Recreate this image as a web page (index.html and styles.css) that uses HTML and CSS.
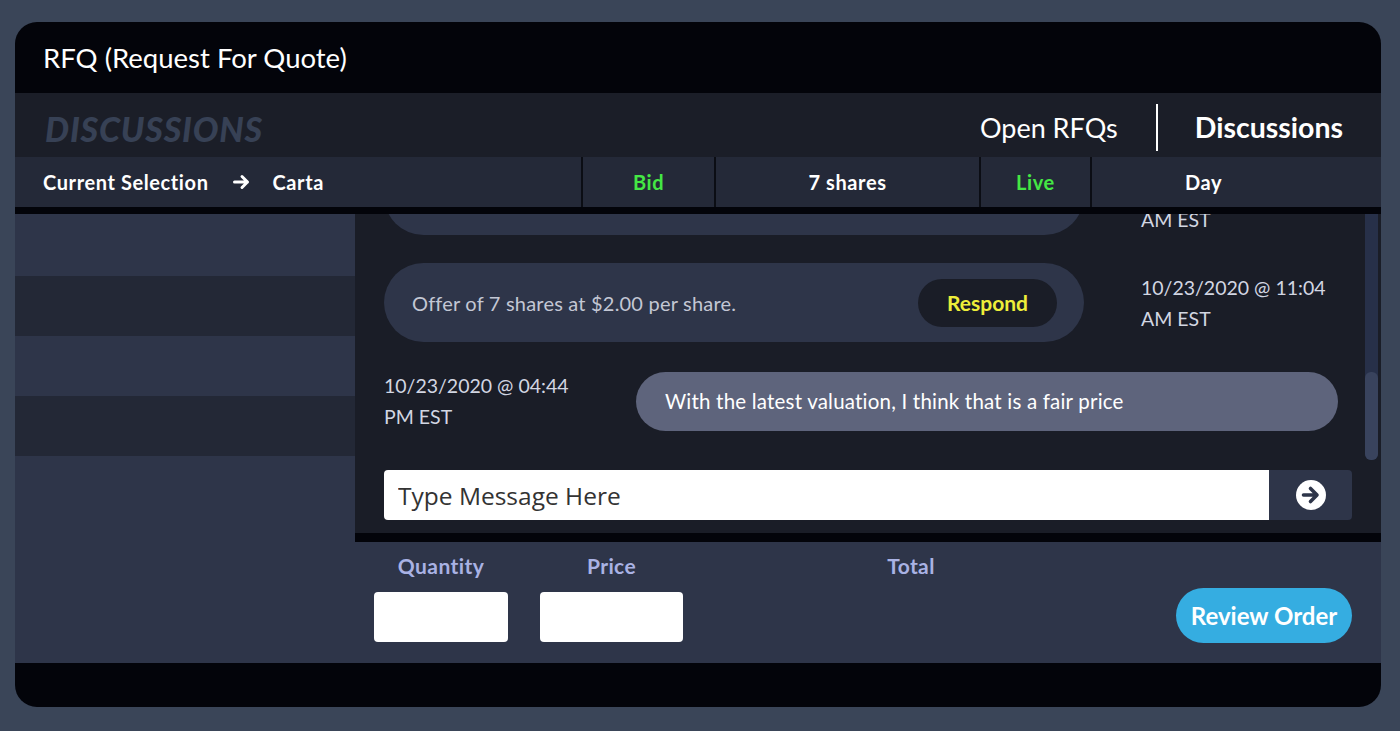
FILE: index.html
```html
<!DOCTYPE html>
<html lang="en">
<head>
  <meta charset="UTF-8" />
  <meta name="viewport" content="width=device-width, initial-scale=1.0"/>
  <title>RFQ Discussions</title>
  <link rel="stylesheet" href="styles.css">
</head>
<body>

  <div class="panel">

    <!-- Title -->
    <div class="title-bar">RFQ (Request For Quote)</div>

    <!-- Tabs -->
    <div class="sub-nav">
      <span class="section-name">DISCUSSIONS</span>
      <div class="tabs">
        <span class="tab">Open RFQs</span>
        <span class="tab-divider"></span>
        <span class="tab tab-active">Discussions</span>
      </div>
    </div>

    <!-- Current selection -->
    <div class="selection-bar">
      <div class="cell cell-left">
        <span>Current Selection</span>
        <svg class="arrow" width="18" height="16" viewBox="0 0 18 16">
          <path d="M1.5 8h13M9 2.5l5.5 5.5-5.5 5.5" fill="none" stroke="#fff" stroke-width="3" stroke-linecap="round" stroke-linejoin="round"/>
        </svg>
        <span>Carta</span>
      </div>
      <div class="cell green">Bid</div>
      <div class="cell">7 shares</div>
      <div class="cell green">Live</div>
      <div class="cell cell-last">Day</div>
    </div>

    <div class="main">
      <!-- Left list -->
      <div class="rfq-list">
        <div class="rfq-row row-first"></div>
        <div class="rfq-row row-dark"></div>
        <div class="rfq-row"></div>
        <div class="rfq-row row-dark"></div>
        <div class="rfq-row row-fill"></div>
      </div>

      <!-- Chat -->
      <div class="chat">
        <div class="messages-wrap">
          <div class="messages">
            <div class="msg msg-in">
              <div class="bubble bubble-offer"></div>
              <div class="stamp stamp-first">10/23/2020 @ 10:58 AM EST</div>
            </div>

            <div class="msg msg-in">
              <div class="bubble bubble-offer">
                <span>Offer of 7 shares at $2.00 per share.</span>
                <button class="respond">Respond</button>
              </div>
              <div class="stamp">10/23/2020 @ 11:04 AM EST</div>
            </div>

            <div class="msg msg-out">
              <div class="stamp stamp-left">10/23/2020 @ 04:44 PM EST</div>
              <div class="bubble bubble-mine">With the latest valuation, I think that is a fair price</div>
            </div>
          </div>
          <div class="scrollbar"><div class="thumb"></div></div>
        </div>

        <div class="composer">
          <input type="text" class="msg-input" placeholder="Type Message Here">
          <button class="send">
            <svg width="32" height="32" viewBox="0 0 32 32">
              <circle cx="16" cy="16" r="15" fill="#fff"/>
              <path d="M8.5 16h13M15.5 9.5l6.5 6.5-6.5 6.5" fill="none" stroke="#2e3549" stroke-width="3.6" stroke-linecap="round" stroke-linejoin="round"/>
            </svg>
          </button>
        </div>
      </div>
    </div>

    <!-- Order form -->
    <div class="order-form">
      <div class="field field-qty">
        <label>Quantity</label>
        <input type="text" class="box">
      </div>
      <div class="field field-price">
        <label>Price</label>
        <input type="text" class="box">
      </div>
      <div class="field field-total">
        <label>Total</label>
      </div>
      <button class="review">Review Order</button>
    </div>

    <div class="panel-footer"></div>
  </div>

</body>
</html>
```

FILE: styles.css
```css
body, html {
  margin: 0;
  padding: 0;
  height: 100%;
  overflow: hidden;
}

body {
  background-color: #3a4558;
  font-family: "Lato", "Liberation Sans", sans-serif;
  color: #fff;
  padding: 22px 19px 0 15px;
  box-sizing: border-box;
}

.panel {
  height: 685px;
  background-color: #03040a;
  border-radius: 22px;
  overflow: hidden;
  display: flex;
  flex-direction: column;
}

.title-bar {
  height: 71px;
  flex-shrink: 0;
  display: flex;
  align-items: center;
  padding-left: 28px;
  font-size: 27.5px;
}

.sub-nav {
  height: 64px;
  flex-shrink: 0;
  background-color: #1b1e28;
  display: flex;
  justify-content: space-between;
  align-items: center;
  padding: 0 38px 0 30px;
}

.section-name {
  font-size: 34px;
  font-weight: 900;
  font-style: italic;
  letter-spacing: 0.8px;
  color: #374155;
  margin-top: 6px;
}

.tabs {
  display: flex;
  align-items: center;
  margin-top: 4px;
}

.tab {
  font-size: 27px;
}

.tab-active {
  font-size: 28.5px;
  font-weight: bold;
}

.tab-divider {
  width: 2px;
  height: 47px;
  background-color: #fff;
  margin: 0 37px 0 38px;
}

.selection-bar {
  height: 50px;
  flex-shrink: 0;
  background-color: #242938;
  border-bottom: 7px solid #03040a;
  display: grid;
  grid-template-columns: 568px 133px 265px 111px 1fr;
  font-size: 20px;
  font-weight: bold;
  letter-spacing: 0.6px;
  line-height: 24px;
}

.cell {
  display: flex;
  align-items: center;
  justify-content: center;
  border-right: 2px solid #0b0d14;
}

.cell-left {
  justify-content: flex-start;
  padding-left: 28px;
}

.cell-last {
  border-right: none;
  padding-right: 66px;
}

.arrow {
  margin: 0 22px 0 24px;
}

.green {
  color: #44e744;
}

.main {
  height: 328px;
  flex-shrink: 0;
  display: flex;
}

.rfq-list {
  width: 340px;
  display: flex;
  flex-direction: column;
}

.rfq-row {
  height: 60px;
  background-color: #2e3549;
}

.row-first {
  height: 62px;
}

.row-dark {
  background-color: #232836;
}

.row-fill {
  flex: 1;
}

.chat {
  flex: 1;
  background-color: #1a1d27;
  border-bottom: 9px solid #03040a;
  display: flex;
  flex-direction: column;
  padding: 0 29px 13px 29px;
  position: relative;
}

.messages-wrap {
  height: 246px;
  overflow: hidden;
  display: flex;
}

.messages {
  flex: 1;
  margin-top: -58px;
  display: flex;
  flex-direction: column;
  gap: 28px;
}

.msg {
  display: flex;
  align-items: center;
}

.bubble {
  border-radius: 40px;
  font-size: 20px;
  letter-spacing: 0.2px;
}

.bubble-offer {
  width: 700px;
  height: 79px;
  flex-shrink: 0;
  box-sizing: border-box;
  background-color: #2e3549;
  color: #c3c7d4;
  display: flex;
  align-items: center;
  justify-content: space-between;
  padding: 0 27px 0 28px;
}

.respond {
  width: 139px;
  height: 48px;
  border: none;
  border-radius: 24px;
  background-color: #1a1d27;
  color: #eeee3a;
  font-family: inherit;
  font-size: 21px;
  font-weight: bold;
}

.stamp {
  width: 200px;
  margin-left: 57px;
  font-size: 19.5px;
  line-height: 31px;
  color: #d2d6e2;
}

.stamp-first {
  margin-top: 16px;
}

.stamp-left {
  margin-left: 0;
  width: 200px;
}

.bubble-mine {
  width: 702px;
  height: 59px;
  margin-left: auto;
  margin-right: 14px;
  box-sizing: border-box;
  background-color: #5e647c;
  color: #fff;
  font-size: 20.5px;
  display: flex;
  align-items: center;
  padding-left: 29px;
}

.scrollbar {
  position: absolute;
  top: 0;
  right: 3px;
  width: 13px;
  height: 246px;
  background-color: #273049;
  border-radius: 0 0 6px 6px;
}

.thumb {
  margin-top: 158px;
  height: 88px;
  background-color: #39435d;
  border-radius: 6px;
}

.composer {
  margin-top: 10px;
  height: 50px;
  display: flex;
}

.msg-input {
  flex: 1;
  border: none;
  border-radius: 4px 0 0 4px;
  padding: 0 14px;
  font-family: "Open Sans", sans-serif;
  font-size: 24.5px;
  outline: none;
}

.msg-input::placeholder {
  color: #333;
}

.send {
  width: 83px;
  border: none;
  border-radius: 0 4px 4px 0;
  background-color: #2e3549;
  display: flex;
  align-items: center;
  justify-content: center;
  padding: 0;
}

.order-form {
  height: 121px;
  flex-shrink: 0;
  background-color: #2e3549;
  display: flex;
  padding: 0 29px 0 359px;
}

.field {
  display: flex;
  flex-direction: column;
  align-items: center;
  padding-top: 11px;
}

.field label {
  font-size: 21px;
  font-weight: bold;
  letter-spacing: 0.4px;
  color: #a9b2e4;
  height: 26px;
  margin-bottom: 13px;
}

.field-qty {
  width: 134px;
}

.field-price {
  width: 143px;
  margin-left: 32px;
}

.field-total {
  width: 392px;
  margin-left: 32px;
}

.box {
  width: 100%;
  height: 50px;
  box-sizing: border-box;
  border: none;
  border-radius: 4px;
  background-color: #fff;
}

.review {
  margin-left: auto;
  margin-top: 46px;
  width: 176px;
  height: 55px;
  border: none;
  border-radius: 28px;
  background-color: #35ade1;
  color: #fff;
  font-family: inherit;
  font-size: 24px;
  font-weight: bold;
}

.panel-footer {
  flex: 1;
}
```
